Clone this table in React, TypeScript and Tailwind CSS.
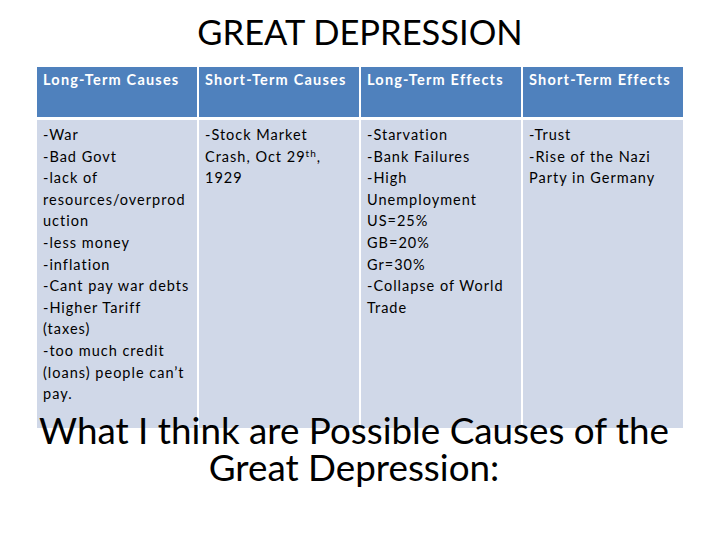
// Great Depression slide: title, four-column table, overlapping question heading.

const FONT = "font-['Lato','Open_Sans',sans-serif]";

type Column = { head: string; lines: React.ReactNode[] };

const columns: Column[] = [
  {
    head: 'Long-Term Causes',
    lines: [
      '-War',
      '-Bad Govt',
      '-lack of',
      'resources/overprod',
      'uction',
      '-less money',
      '-inflation',
      '-Cant pay war debts',
      '-Higher Tariff',
      '(taxes)',
      '-too much credit',
      '(loans) people can’t',
      'pay.',
    ],
  },
  {
    head: 'Short-Term Causes',
    lines: [
      '-Stock Market',
      <>
        Crash, Oct 29<sup className="text-[10px]">th</sup>,
      </>,
      '1929',
    ],
  },
  {
    head: 'Long-Term Effects',
    lines: [
      '-Starvation',
      '-Bank Failures',
      '-High',
      'Unemployment',
      'US=25%',
      'GB=20%',
      'Gr=30%',
      '-Collapse of World',
      'Trade',
    ],
  },
  {
    head: 'Short-Term Effects',
    lines: ['-Trust', '-Rise of the Nazi', 'Party in Germany'],
  },
];

export default function App() {
  return (
    <div className={`${FONT} w-[720px] h-[540px] bg-white text-black overflow-hidden`}>
      <h1 className="pt-[12px] text-center text-[34.5px] leading-[40px]">GREAT DEPRESSION</h1>

      <div className="ml-[37px] mt-[15px] grid w-[646px] grid-cols-4 gap-x-[2px] gap-y-[3px]">
        {columns.map((c) => (
          <div
            key={c.head}
            className="h-[50px] bg-[#4f81bd] px-[6px] pt-[2px] text-[14.5px] font-bold leading-[22px] tracking-[1.2px] text-white"
          >
            {c.head}
          </div>
        ))}
        {columns.map((c) => (
          <div
            key={c.head + '-body'}
            className="h-[308px] bg-[#d0d8e8] px-[6px] pt-[4px] text-[14.5px] leading-[21.6px] tracking-[1px]"
          >
            {c.lines.map((l, i) => (
              <div key={i} className="whitespace-nowrap">
                {l}
              </div>
            ))}
          </div>
        ))}
      </div>

      <h2 className="relative -mt-[16px] pr-[12px] text-center text-[36.8px] leading-[37px]">
        What I think are Possible Causes of the
        <br />
        Great Depression:
      </h2>
    </div>
  );
}
